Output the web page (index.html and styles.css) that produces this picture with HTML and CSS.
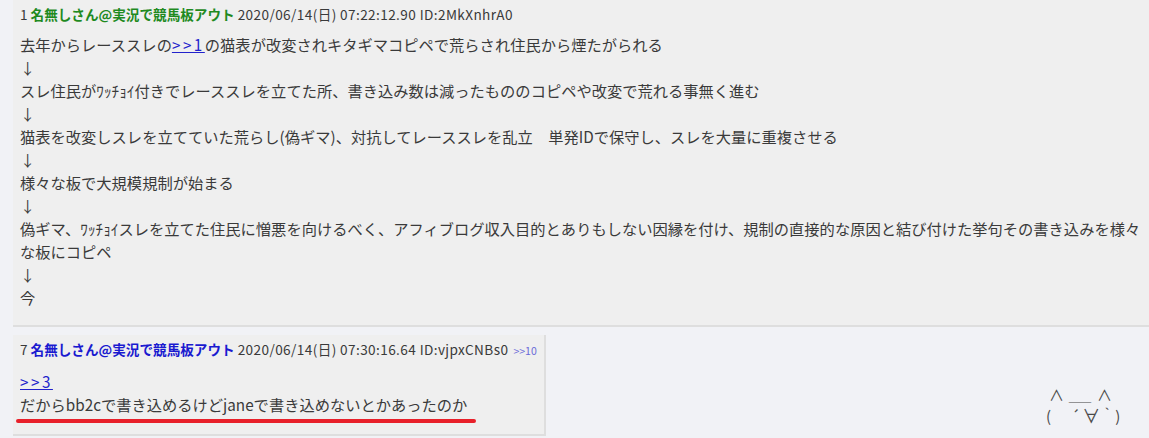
FILE: index.html
```html
<!DOCTYPE html>
<html lang="ja">
<head>
<meta charset="utf-8">
<link rel="stylesheet" href="styles.css">
</head>
<body>
<div class="thread">
  <div class="post post-wide">
    <div class="head"><span class="num">1</span> <b class="name green">名無しさん@実況で競馬板アウト</b> <span class="meta">2020/06/14(日) 07:22:12.90 ID:2MkXnhrA0</span></div>
    <div class="body">去年からレーススレの<a class="anc" href="#">&gt;&gt;1</a>の猫表が改変されキタギマコピペで荒らされ住民から煙たがられる<br>↓<br>スレ住民がﾜｯﾁｮｲ付きでレーススレを立てた所、書き込み数は減ったもののコピペや改変で荒れる事無く進む<br>↓<br>猫表を改変しスレを立てていた荒らし(偽ギマ)、対抗してレーススレを乱立　単発IDで保守し、スレを大量に重複させる<br>↓<br>様々な板で大規模規制が始まる<br>↓<br>偽ギマ、ﾜｯﾁｮｲスレを立てた住民に憎悪を向けるべく、アフィブログ収入目的とありもしない因縁を付け、規制の直接的な原因と結び付けた挙句その書き込みを様々な板にコピペ<br>↓<br>今</div>
  </div>
  <div class="post post-fit">
    <div class="head"><span class="num">7</span> <b class="name blue">名無しさん@実況で競馬板アウト</b> <span class="meta">2020/06/14(日) 07:30:16.64 ID:vjpxCNBs0</span> <a class="ref" href="#">&gt;&gt;10</a></div>
    <div class="body"><a class="anc" href="#">&gt;&gt;3</a><br>だからbb2cで書き込めるけどjaneで書き込めないとかあったのか</div>
    <div class="redline"></div>
  </div>
</div>
<div class="aa">
  <div class="aa-row top"><span class="ear">∧</span><span class="bar">＿</span><span class="ear">∧</span></div>
  <div class="aa-row face"><span class="pl">(</span><span class="eye1">´</span><span class="mouth">∀</span><span class="eye2">｀</span><span class="pr">)</span></div>
</div>
</body>
</html>
```

FILE: styles.css
```css
html, body {
  margin: 0;
  padding: 0;
}
body {
  background: #f1f2f6;
  color: #3a3a3a;
  font-family: "Noto Sans CJK JP", "Noto Sans", sans-serif;
  overflow: hidden;
  height: 438px;
  position: relative;
}
.thread {
  display: flex;
  flex-direction: column;
  align-items: flex-start;
  gap: 8px;
  padding-left: 13px;
}
.post {
  background: #efefef;
  border-bottom: 2px solid #dedede;
  padding: 5px 7px 16px 7px;
  position: relative;
}
.post-wide {
  align-self: stretch;
  margin-right: -4px;
}
.post-fit {
  border-right: 2px solid #dedede;
  padding-bottom: 18px;
}
.head {
  font-size: 13.6px;
  line-height: 18px;
  color: #3a3a3a;
  white-space: nowrap;
}
.meta {
  letter-spacing: 0.4px;
}
.name.green { color: #1f8a1f; }
.name.blue { color: #1a1ad0; }
.ref {
  font-size: 10.5px;
  color: #6a6ad8;
  text-decoration: none;
  margin-left: 2px;
}
.body {
  font-size: 15.28px;
  line-height: 23px;
  margin-top: 10px;
  color: #3a3a3a;
}
.anc {
  color: #2222cc;
  text-decoration: underline;
  letter-spacing: 2.5px;
}
.redline {
  position: absolute;
  left: 3px;
  top: 84px;
  width: 460px;
  height: 4px;
  border-radius: 2px;
  background: #e8202a;
}
.aa {
  position: absolute;
  left: 1046px;
  top: 384px;
  font-size: 15px;
  color: #4a4a4a;
  white-space: nowrap;
  display: flex;
  flex-direction: column;
}
.aa-row {
  display: flex;
  align-items: flex-end;
  height: 21px;
}
.ear {
  display: inline-block;
  width: 14px;
  text-align: center;
  line-height: 21px;
}
.top .ear:first-child { margin-left: 3px; }
.bar {
  display: inline-block;
  width: 34px;
  text-align: center;
  transform: scaleX(1.5);
  line-height: 21px;
}
.face span {
  display: inline-block;
  line-height: 21px;
}
.eye1 { margin-left: 20px; }
.mouth { margin-left: 2px; font-size: 18px; line-height: 21px; }
.eye2 { margin-left: 0; }
.pr { margin-left: 0; }
```
